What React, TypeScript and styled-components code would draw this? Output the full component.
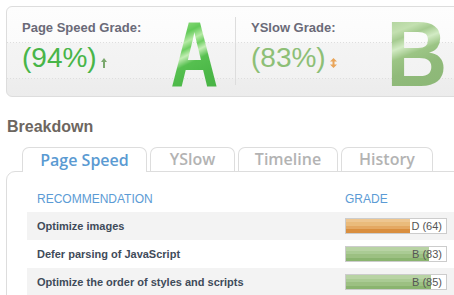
import styled, { createGlobalStyle } from 'styled-components';

const GlobalStyle = createGlobalStyle`
  html, body {
    margin: 0;
    padding: 0;
    background: #ffffff;
    overflow: hidden;
    font-family: "Liberation Sans", Arial, sans-serif;
  }
`

type Grade = {
  title: string
  score: number
  grade: string
}

const grades: Grade[] = [
  { title: 'Optimize images', score: 64, grade: 'D' },
  { title: 'Defer parsing of JavaScript', score: 83, grade: 'B' },
  { title: 'Optimize the order of styles and scripts', score: 85, grade: 'B' },
]

const tabs = ['Page Speed', 'YSlow', 'Timeline', 'History']
const tabWidths = [125, 85, 100, 92]

const UpArrow = () => (
  <svg width="6" height="10" viewBox="0 0 6 10">
    <path d="M3 0 L6 4 L4 4 L4 10 L2 10 L2 4 L0 4 Z" fill="#7ba86e" />
  </svg>
)

const UpDownArrow = () => (
  <svg width="7" height="10" viewBox="0 0 7 10">
    <path d="M3.5 0 L7 3.5 L4.5 3.5 L4.5 6.5 L7 6.5 L3.5 10 L0 6.5 L2.5 6.5 L2.5 3.5 L0 3.5 Z" fill="#e9a55a" />
  </svg>
)

export default function App() {
  return (
    <Page>
      <GlobalStyle />
      <GradePanel>
        <GradeBlock $width={228} $padLeft={15}>
          <GradeInfo>
            <GradeLabel>Page Speed Grade:</GradeLabel>
            <GradeValue $color="#48b548">
              (94%)<ArrowBox><UpArrow /></ArrowBox>
            </GradeValue>
          </GradeInfo>
          <BigLetter $tone="a" $scale={0.72} $right={17}>A</BigLetter>
        </GradeBlock>
        <Divider />
        <GradeBlock $width={211} $padLeft={15}>
          <GradeInfo>
            <GradeLabel>YSlow Grade:</GradeLabel>
            <GradeValue $color="#8dbf76">
              (83%)<ArrowBox><UpDownArrow /></ArrowBox>
            </GradeValue>
          </GradeInfo>
          <BigLetter $tone="b" $scale={0.92} $right={0}>B</BigLetter>
        </GradeBlock>
      </GradePanel>

      <Breakdown>
        <SectionTitle>Breakdown</SectionTitle>
        <TabBar>
          {tabs.map((t, i) => (
            <Tab key={t} $active={i === 0} $width={tabWidths[i]}>{t}</Tab>
          ))}
        </TabBar>
        <ContentPanel>
          <HeaderRow>
            <HeaderCell>Recommendation</HeaderCell>
            <HeaderCell>Grade</HeaderCell>
          </HeaderRow>
          {grades.map((g, i) => (
            <Row key={g.title} $shaded={i % 2 === 0}>
              <RowTitle>{g.title}</RowTitle>
              <Bar>
                <BarFill $kind={g.score < 70 ? 'bad' : 'good'} style={{ width: `${g.score}%` }} />
                <BarText>{g.grade} ({g.score})</BarText>
              </Bar>
            </Row>
          ))}
        </ContentPanel>
      </Breakdown>
    </Page>
  )
}

const Page = styled.div`
  width: 454px;
  height: 295px;
  overflow: hidden;
`
const dots = 'repeating-linear-gradient(90deg, #dedede 0 1px, transparent 1px 3px)'

const GradePanel = styled.div`
  margin: 6px 0 0 6px;
  width: 480px;
  height: 89px;
  display: flex;
  border: 1px solid #dddddd;
  border-radius: 6px 0 0 6px;
  background:
    ${dots} 0 35px / 100% 1px no-repeat,
    ${dots} 0 71px / 100% 1px no-repeat,
    linear-gradient(#fdfdfd 0, #fbfbfb 35px, #f4f4f4 36px, #f2f2f2 71px, #eeeeee 72px, #ececec 100%);
`
const GradeBlock = styled.div<{ $width: number; $padLeft: number }>`
  width: ${p => p.$width}px;
  padding-left: ${p => p.$padLeft}px;
  box-sizing: border-box;
  display: flex;
  align-items: flex-start;
`
const GradeInfo = styled.div`
  display: flex;
  flex-direction: column;
  padding-top: 13px;
`
const GradeLabel = styled.div`
  font-size: 13px;
  line-height: 15px;
  font-weight: bold;
  color: #6a6a78;
`
const GradeValue = styled.div<{ $color: string }>`
  margin-top: 7px;
  font-size: 28px;
  line-height: 32px;
  color: ${p => p.$color};
  display: flex;
  align-items: flex-end;
`
const ArrowBox = styled.span`
  display: flex;
  margin: 0 0 6px 4px;
`
const BigLetter = styled.div<{ $tone: 'a' | 'b'; $scale: number; $right: number }>`
  margin-left: auto;
  margin-right: ${p => p.$right}px;
  margin-top: 1px;
  font-size: 92px;
  line-height: 92px;
  font-weight: bold;
  transform: scaleX(${p => p.$scale});
  transform-origin: right center;
  color: transparent;
  -webkit-background-clip: text;
  background-clip: text;
  background-image: ${p => p.$tone === 'a'
    ? 'linear-gradient(160deg, #5cc454 0%, #84d874 20%, #62ca58 28%, #b6eaa5 36%, #6fcf63 42%, #c4eeb5 48%, #56c050 56%, #4cb848 72%, #45b042 100%)'
    : 'linear-gradient(160deg, #9fc78a 0%, #c3e0b0 24%, #a5cb90 31%, #d2ebc4 39%, #9cc585 48%, #90ba7a 62%, #8ab675 100%)'};
`
const Divider = styled.div`
  width: 1px;
  height: 68px;
  margin-top: 10px;
  background: #dddddd;
  flex-shrink: 0;
`
const Breakdown = styled.div`
  padding-left: 6px;
  margin-top: 20px;
`
const SectionTitle = styled.h2`
  margin: 0 0 0 1px;
  font-size: 16px;
  line-height: 19px;
  font-weight: bold;
  color: #6d665f;
`
const TabBar = styled.div`
  display: flex;
  gap: 3px;
  margin: 11px 0 0 16px;
  position: relative;
  z-index: 1;
`
const Tab = styled.div<{ $active: boolean; $width: number }>`
  width: ${p => p.$width}px;
  height: ${p => (p.$active ? 25 : 24)}px;
  margin-bottom: ${p => (p.$active ? -1 : 0)}px;
  box-sizing: border-box;
  border: 1px solid #dddddd;
  border-bottom: none;
  border-radius: 7px 7px 0 0;
  background: #ffffff;
  display: flex;
  align-items: center;
  justify-content: center;
  padding-bottom: 1px;
  font-family: "Open Sans", sans-serif;
  font-size: 16px;
  font-weight: 600;
  color: ${p => (p.$active ? '#5a9ad2' : '#b3b3b3')};
`
const ContentPanel = styled.div`
  width: 480px;
  border: 1px solid #dddddd;
  border-radius: 9px 0 0 0;
  padding: 20px 0 0 20px;
`
const HeaderRow = styled.div`
  display: grid;
  grid-template-columns: 318px 1fr;
  height: 20px;
`
const HeaderCell = styled.div`
  padding-left: 10px;
  font-size: 12px;
  line-height: 14px;
  color: #5b9bd5;
  text-transform: uppercase;
  &:last-child {
    padding-left: 0;
  }
`
const Row = styled.div<{ $shaded: boolean }>`
  display: grid;
  grid-template-columns: 318px 1fr;
  align-items: center;
  height: 28px;
  background: ${p => (p.$shaded ? '#f3f3f3' : '#ffffff')};
`
const RowTitle = styled.div`
  padding-left: 10px;
  font-size: 11px;
  font-weight: bold;
  color: #3f4b5a;
`
const Bar = styled.div`
  position: relative;
  width: 100px;
  height: 14px;
  border: 1px solid #cccccc;
  background: #ffffff;
`
const BarFill = styled.div<{ $kind: 'good' | 'bad' }>`
  height: 100%;
  background: ${p => p.$kind === 'bad'
    ? 'linear-gradient(#eec690 0 25%, #eabb7b 25% 50%, #e4a862 50% 75%, #d98e3e 75%)'
    : 'linear-gradient(#b8d3a4 0 25%, #aacb94 25% 50%, #9cc082 50% 75%, #8ab46f 75%)'};
`
const BarText = styled.span`
  position: absolute;
  right: 4px;
  top: 0;
  line-height: 14px;
  font-size: 11px;
  color: #555555;
`
